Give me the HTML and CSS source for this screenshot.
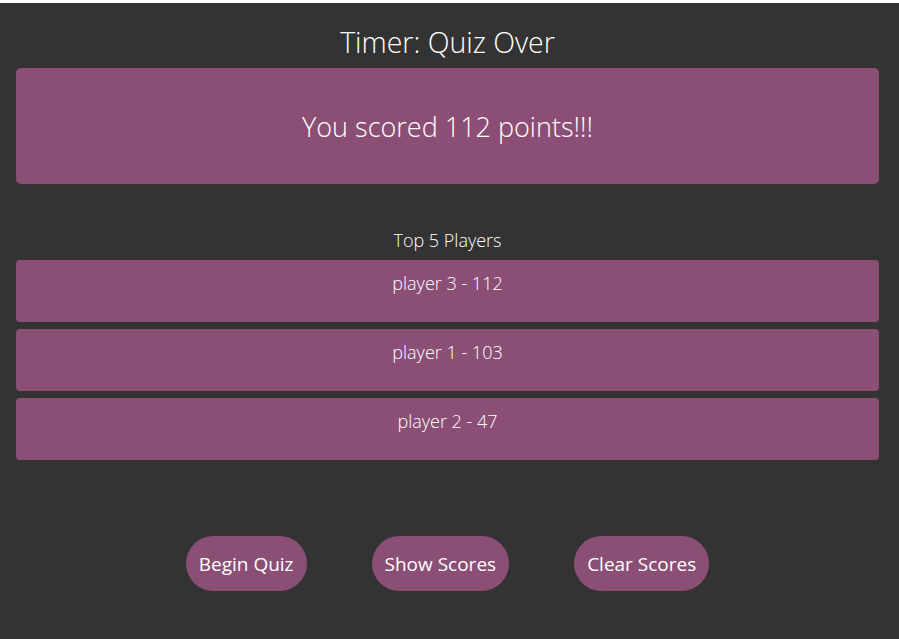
FILE: index.html
```html
<!DOCTYPE html>
<html lang="en">
<head>
<meta charset="utf-8">
<title>Quiz</title>
<link rel="stylesheet" href="styles.css">
</head>
<body>
<div class="page">
  <h1 class="timer">Timer: Quiz Over</h1>
  <div class="result">You scored 112 points!!!</div>
  <div class="scores">
    <div class="scores-title">Top 5 Players</div>
    <div class="score-row">player 3 - 112</div>
    <div class="score-row">player 1 - 103</div>
    <div class="score-row">player 2 - 47</div>
  </div>
  <div class="actions">
    <button class="btn">Begin Quiz</button>
    <button class="btn">Show Scores</button>
    <button class="btn">Clear Scores</button>
  </div>
</div>
</body>
</html>
```

FILE: styles.css
```css
html, body {
  margin: 0;
  padding: 0;
  background: #333333;
  height: 100%;
}
body {
  border-top: 3px solid #ffffff;
  box-sizing: border-box;
  font-family: "Open Sans", "Noto Sans", sans-serif;
  color: #ffffff;
}
.page {
  padding: 0 20px 0 16px;
}
.timer {
  margin: 0;
  padding-top: 21px;
  height: 44px;
  line-height: 36px;
  font-size: 28.5px;
  font-weight: 300;
  text-align: center;
}
.result {
  height: 116px;
  border-radius: 5px;
  background: #8b4f75;
  display: flex;
  align-items: center;
  justify-content: center;
  font-size: 27px;
  font-weight: 300;
}
.scores {
  margin-top: 44px;
}
.scores-title {
  text-align: center;
  font-size: 18px;
  font-weight: 300;
  line-height: 24px;
  margin-bottom: 8px;
}
.score-row {
  height: 62px;
  box-sizing: border-box;
  padding-top: 11px;
  margin-bottom: 7px;
  border-radius: 4px;
  background: #8b4f75;
  text-align: center;
  font-size: 18px;
  font-weight: 300;
  line-height: 24px;
}
.actions {
  margin-top: 76px;
  display: flex;
  justify-content: center;
  gap: 65px;
}
.btn {
  height: 55px;
  padding: 0 13px;
  border: none;
  border-radius: 28px;
  background: #8b4f75;
  color: #ffffff;
  font-family: "Open Sans", "Noto Sans", sans-serif;
  font-size: 19px;
  font-weight: 400;
}
```
